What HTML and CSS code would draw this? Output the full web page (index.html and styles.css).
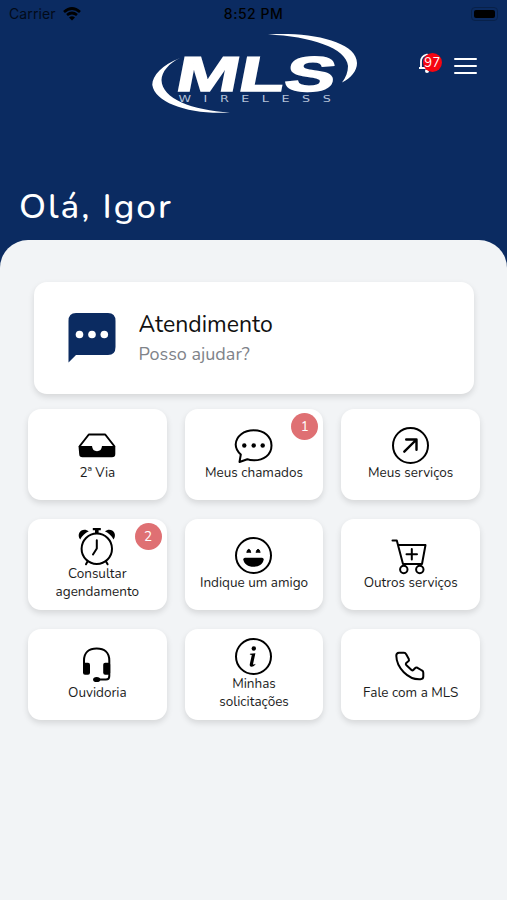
FILE: index.html
```html
<!DOCTYPE html>
<html lang="pt-BR">
<head>
    <meta charset="UTF-8">
    <title>MLS Wireless</title>
    <link rel="stylesheet" href="styles.css">
</head>
<body>
<div class="status">
    <div class="carrier">
        <span>Carrier</span>
        <svg class="wifi" viewBox="0 0 18 14">
            <path d="M1 5Q9-2 17 5M4 8Q9 4 14 8" fill="none" stroke="#000" stroke-width="2.7"/>
            <path d="M6 10.5Q9 8 12 10.5L9 13.5Z"/>
        </svg>
    </div>
    <div class="time">8:52 PM</div>
    <div class="battery"><i></i></div>
</div>
<header class="header">
    <svg class="logo" viewBox="0 0 206 80" fill="#fff">
        <path d="M116 .4C160-2.500 205 8 205 29C205 37 199 44 190 48.500C194 43 196 38 196 32C195 14 158 2 116 .4Z"/>
        <path d="M28 24C10 31 0 42 .3 51C3 69 38 81 78 78.500C40 76 10 65 9.500 46C9.500 38 17 29 28 24Z"/>
        <text class="logo-name" transform="translate(22 57) skewX(-11) scale(1.38 1)" textLength="115" lengthAdjust="spacingAndGlyphs">MLS</text>
        <text class="logo-sub" transform="translate(26.500 67.500) scale(1.5 1)" textLength="101.500">WIRELESS</text>
    </svg>
    <div class="actions">
        <div class="bell">
            <svg viewBox="0 0 20 22" fill="none" stroke="#fff" stroke-width="1.800">
                <path d="M3 16V9.500Q3 4 9 2.500Q15 4 15 9.500V16H17M1 16H17"/>
                <circle cx="9" cy="19" r="2" fill="#fff" stroke="none"/>
            </svg>
            <span class="count">97</span>
        </div>
        <div class="menu"><i></i><i></i><i></i></div>
    </div>
</header>
<h1 class="hello">Olá, Igor</h1>
<main class="panel">
    <div class="help">
        <svg class="help-icon" viewBox="0 0 48 50">
            <path d="M8 0H40Q47.500 0 47.500 8V34Q47.500 42 40 42H8L.5 49.500V8Q.5 0 8 0Z" fill="#0b2b61"/>
            <g fill="#fff">
                <circle cx="11.500" cy="21.500" r="3.800"/>
                <circle cx="24" cy="21.500" r="3.800"/>
                <circle cx="36.300" cy="21.500" r="3.800"/>
            </g>
        </svg>
        <div>
            <h2>Atendimento</h2>
            <p>Posso ajudar?</p>
        </div>
    </div>
    <div class="grid">
        <div class="tile">
            <svg class="icon" viewBox="0 0 36 36">
                <path class="line" d="M.8 18L9.800 6.500H26.200L35.200 18"/>
                <path d="M-.5 18H13Q13.500 23.200 18 23.200T23 18H36.300V26Q36.300 29.300 33 29.300H3.500Q.2 29.300.2 26Z"/>
            </svg>
            <span>2ª Via</span>
        </div>
        <div class="tile">
            <svg class="icon" viewBox="0 0 36 36">
                <path class="line" d="M3.500 34L4.800 26.500C1.500 23.500-.3 20-.3 16.500C0 8 8 2.300 17.800 2.300C28 2.300 35.500 8.500 35.500 17.500C35.500 27 27.500 32.300 18 32.300C15.500 32.300 13 32 11.300 31.200Z"/>
                <circle cx="8.300" cy="17.500" r="2.200"/>
                <circle cx="17.700" cy="17.500" r="2.200"/>
                <circle cx="26.700" cy="17.500" r="2.200"/>
            </svg>
            <span>Meus chamados</span>
            <b class="badge">1</b>
        </div>
        <div class="tile">
            <svg class="icon" viewBox="0 0 36 36">
                <circle class="line" cx="17.500" cy="17.500" r="17.500"/>
                <path class="line arrow" d="M11.300 23.700L23.500 11.500M13.200 11.500H23.500V21.800"/>
            </svg>
            <span>Meus serviços</span>
        </div>
        <div class="tile">
            <svg class="icon" viewBox="0 0 36 36">
                <circle class="line" cx="17.800" cy="19.700" r="15.200"/>
                <path class="line" d="M17.800 11.300V19.500L14 25.500M8.500 32.500L7 35.300M27 32.500L28.600 35.300"/>
                <path d="M13.800-1H21.800V1.200H19.600V4.500H16V1.200H13.800Z"/>
                <path d="M1.200 10.500C-3.500 4 4-2.500 9.800 2.300Q4 5 1.200 10.500ZM34.500 10.500C39.200 4 31.700-2.500 25.900 2.300Q31.700 5 34.500 10.500Z"/>
            </svg>
            <span>Consultar<br>agendamento</span>
            <b class="badge">2</b>
        </div>
        <div class="tile">
            <svg class="icon" viewBox="0 0 36 36">
                <circle class="line" cx="17.500" cy="17.500" r="17.500"/>
                <path d="M7.300 21.500Q7.300 19.800 9 19.800H26Q27.700 19.800 27.700 21.500C27 26 23 28.800 17.500 28.800S8 26 7.300 21.500Z"/>
                <path class="eyes" d="M10.900 14.800C11.200 10.200 14.400 10.200 14.700 14.800M20.200 14.800C20.500 10.200 23.700 10.200 24 14.800"/>
            </svg>
            <span>Indique um amigo</span>
        </div>
        <div class="tile">
            <svg class="icon" viewBox="0 0 36 36">
                <path class="line" d="M-.5 2.500H3.800L10 26H29L32.500 7H5M18.800 11V21.500M13.500 16.300H24"/>
                <circle class="line" cx="10.800" cy="31.500" r="3.700"/>
                <circle class="line" cx="26.800" cy="31.500" r="3.700"/>
            </svg>
            <span>Outros serviços</span>
        </div>
        <div class="tile">
            <svg class="icon" viewBox="0 0 36 36">
                <path class="line" d="M5 18V12.500C5 4.500 10 .4 17.700.4S30.300 4.500 30.300 12.500V28Q30.300 31.500 27 31.500H18"/>
                <rect x="4" y="14.800" width="7" height="12" rx="2"/>
                <rect x="24.200" y="14.800" width="7" height="12" rx="2"/>
                <ellipse cx="17.700" cy="31.500" rx="3.600" ry="2.600"/>
            </svg>
            <span>Ouvidoria</span>
        </div>
        <div class="tile">
            <svg class="icon" viewBox="0 0 36 36">
                <circle class="line" cx="17.500" cy="17.500" r="17.500"/>
                <circle cx="17.800" cy="9.500" r="2.200"/>
                <path d="M14 14.800L19.400 14.200L17 25.200Q17.700 26 19.800 24.700Q18 28 15.500 27.800Q13.300 27.500 13.800 25L15.800 16L13.800 15.600Z"/>
            </svg>
            <span>Minhas<br>solicitações</span>
        </div>
        <div class="tile">
            <svg class="icon" viewBox="0 0 36 36">
                <path class="line" d="M6 4.800H11Q12.500 4.800 13.200 6.300L15.800 11Q16.500 12.500 15 13.500L13 15.200Q12.500 16 13.200 17L18.500 22Q19.500 22.800 20.300 22L22 20.200Q23 19.200 24.500 19.800L29 22.500Q30.300 23.200 30.300 24.700V28.500Q30.300 31 27.500 31.200C15 32 3.500 19.500 3.300 7.800Q3.300 5 6 4.800Z"/>
            </svg>
            <span>Fale com a MLS</span>
        </div>
    </div>
</main>
</body>
</html>
```

FILE: styles.css
```css
* {
    box-sizing: border-box;
}

body, h1, h2, p {
    margin: 0;
    font-weight: normal;
}

body {
    display: flex;
    flex-direction: column;
    height: 900px;
    background: #0b2b61;
    font-family: Nunito, "Noto Sans", sans-serif;
    overflow: hidden;
}

.status {
    display: grid;
    grid-template-columns: 1fr auto 1fr;
    align-items: center;
    height: 27px;
    padding: 0 9px;
    font: 14px Inter, sans-serif;
    color: #000;
}

.carrier {
    display: flex;
    align-items: center;
    gap: 7px;
    letter-spacing: .1px;
}

.carrier span {
    opacity: .75;
}

.wifi {
    width: 18px;
    height: 14px;
}

.time {
    font-weight: 500;
    letter-spacing: .5px;
}

.battery {
    justify-self: end;
    width: 27px;
    padding: 2px;
    border: 1px solid #082149;
    border-radius: 4px;
}

.battery i {
    display: block;
    height: 8px;
    border-radius: 2px;
    background: #000;
}

.header {
    display: grid;
    grid-template-columns: 1fr 206px 1fr;
    height: 153px;
    padding-top: 7px;
}

.logo {
    grid-column: 2;
    width: 206px;
    height: 80px;
    margin-left: 1px;
}

.logo-name {
    font: bold 49px "Liberation Sans", sans-serif;
    stroke: #fff;
    stroke-width: 1.5;
}

.logo-sub {
    font: 8.5px "DejaVu Sans", sans-serif;
    fill: #b5c2d8;
}

.actions {
    display: flex;
    justify-content: flex-end;
    gap: 12px;
    height: 26px;
    padding-right: 30px;
    margin-top: 18px;
}

.bell {
    position: relative;
    width: 24px;
}

.bell svg {
    width: 20px;
    height: 22px;
}

.count {
    position: absolute;
    left: 5px;
    top: 1px;
    width: 19px;
    height: 19px;
    border-radius: 50%;
    background: #f60611;
    color: #fff;
    font-size: 13px;
    line-height: 20px;
    letter-spacing: .5px;
    text-align: center;
}

.menu {
    display: flex;
    flex-direction: column;
    gap: 5px;
    width: 23px;
    padding-top: 6px;
}

.menu i {
    height: 2px;
    flex: none;
    border-radius: 1px;
    background: #fff;
}

.hello {
    height: 60px;
    padding-left: 19px;
    color: #fff;
    font-size: 35px;
    font-weight: 500;
    line-height: 53px;
    letter-spacing: 2px;
}

.panel {
    flex: 1;
    padding: 42px 27px 0 28px;
    border-radius: 28px 28px 0 0;
    background: #f2f4f6;
}

.help {
    display: flex;
    align-items: center;
    gap: 22.5px;
    height: 112px;
    margin: 0 6px 14.5px;
    padding-left: 34px;
    border-radius: 13px;
    background: #fff;
    box-shadow: 0 3px 6px rgba(0, 0, 0, .12);
}

.help-icon {
    width: 48px;
    height: 50px;
}

.help h2 {
    color: #111;
    font-size: 23px;
    line-height: 32px;
}

.help p {
    color: #808389;
    font-size: 18px;
    line-height: 27px;
}

.grid {
    display: grid;
    grid-template-columns: repeat(3, 1fr);
    grid-auto-rows: 91.5px;
    gap: 18.5px 18px;
}

.tile {
    position: relative;
    display: flex;
    flex-direction: column;
    align-items: center;
    justify-content: center;
    padding-top: 1px;
    border-radius: 13px;
    background: #fff;
    box-shadow: 0 3px 6px rgba(0, 0, 0, .12);
    color: #1c1c1c;
    font-size: 13.5px;
    line-height: 18px;
    text-align: center;
    white-space: nowrap;
}

.icon {
    width: 36px;
    height: 36px;
    overflow: visible;
}

.line {
    fill: none;
    stroke: #000;
    stroke-width: 2;
    stroke-linecap: round;
    stroke-linejoin: round;
}

.arrow {
    stroke-width: 2.4;
}

.eyes {
    fill: #000;
    stroke: #000;
    stroke-width: 1;
}

.badge {
    position: absolute;
    top: 4.5px;
    right: 5px;
    width: 27px;
    height: 27px;
    border-radius: 50%;
    background: #df7073;
    color: #fff;
    font-weight: normal;
    line-height: 27px;
}
```
